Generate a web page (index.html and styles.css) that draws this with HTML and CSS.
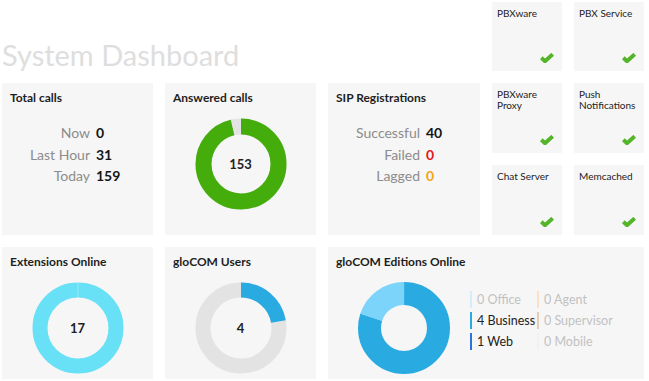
FILE: index.html
```html
<!DOCTYPE html>
<html lang="en">
<head>
<meta charset="utf-8">
<title>System Dashboard</title>
<link rel="stylesheet" href="styles.css">
</head>
<body>
<div class="dash">
  <h1 class="page-title">System Dashboard</h1>

  <section class="tile t1"><span class="tile-name">PBXware</span><svg class="check" viewBox="0 0 14 10" width="14" height="10"><path d="M1.3 4.8 L5 8.2 L12.7 1.3"/></svg></section>
  <section class="tile t2"><span class="tile-name">PBX Service</span><svg class="check" viewBox="0 0 14 10" width="14" height="10"><path d="M1.3 4.8 L5 8.2 L12.7 1.3"/></svg></section>
  <section class="tile t3"><span class="tile-name">PBXware<br>Proxy</span><svg class="check" viewBox="0 0 14 10" width="14" height="10"><path d="M1.3 4.8 L5 8.2 L12.7 1.3"/></svg></section>
  <section class="tile t4"><span class="tile-name">Push<br>Notifications</span><svg class="check" viewBox="0 0 14 10" width="14" height="10"><path d="M1.3 4.8 L5 8.2 L12.7 1.3"/></svg></section>
  <section class="tile t5"><span class="tile-name">Chat Server</span><svg class="check" viewBox="0 0 14 10" width="14" height="10"><path d="M1.3 4.8 L5 8.2 L12.7 1.3"/></svg></section>
  <section class="tile t6"><span class="tile-name">Memcached</span><svg class="check" viewBox="0 0 14 10" width="14" height="10"><path d="M1.3 4.8 L5 8.2 L12.7 1.3"/></svg></section>

  <section class="card c-total">
    <h2 class="card-title">Total calls</h2>
    <div class="stats stats-total">
      <span class="lbl">Now</span><span class="val">0</span>
      <span class="lbl">Last Hour</span><span class="val">31</span>
      <span class="lbl">Today</span><span class="val">159</span>
    </div>
  </section>

  <section class="card c-answered">
    <h2 class="card-title">Answered calls</h2>
    <div class="donut">
      <svg viewBox="0 0 92 92" width="92" height="92">
        <circle class="ring" cx="46" cy="46" r="37.5" stroke="#e4e4e4" stroke-width="16"/>
        <circle class="ring seg" cx="46" cy="46" r="37.5" stroke="#44ad0c" stroke-width="16" stroke-dasharray="226.7 300"/>
      </svg>
      <span class="donut-num">153</span>
    </div>
  </section>

  <section class="card c-sip">
    <h2 class="card-title">SIP Registrations</h2>
    <div class="stats stats-sip">
      <span class="lbl">Successful</span><span class="val">40</span>
      <span class="lbl">Failed</span><span class="val red">0</span>
      <span class="lbl">Lagged</span><span class="val orange">0</span>
    </div>
  </section>

  <section class="card c-ext">
    <h2 class="card-title">Extensions Online</h2>
    <div class="donut">
      <svg viewBox="0 0 92 92" width="92" height="92">
        <circle class="ring" cx="46" cy="46" r="38" stroke="#68e1f7" stroke-width="15"/>
        <line x1="46" y1="0.5" x2="46" y2="15.5" stroke="#ffffff" stroke-opacity="0.35" stroke-width="0.8"/>
      </svg>
      <span class="donut-num">17</span>
    </div>
  </section>

  <section class="card c-users">
    <h2 class="card-title">gloCOM Users</h2>
    <div class="donut">
      <svg viewBox="0 0 92 92" width="92" height="92">
        <circle class="ring" cx="46" cy="46" r="38" stroke="#e3e3e3" stroke-width="15"/>
        <circle class="ring seg" cx="46" cy="46" r="38" stroke="#29abe2" stroke-width="15" stroke-dasharray="53 300"/>
      </svg>
      <span class="donut-num">4</span>
    </div>
  </section>

  <section class="card c-editions">
    <h2 class="card-title">gloCOM Editions Online</h2>
    <div class="editions-body">
      <div class="donut donut-wide">
        <svg viewBox="0 0 92 92" width="92" height="92">
          <circle class="ring seg" cx="46" cy="46" r="34.5" stroke="#29abe2" stroke-width="23" stroke-dasharray="173.4 300"/>
          <circle class="ring seg web" cx="46" cy="46" r="34.5" stroke="#7dd4fa" stroke-width="23" stroke-dasharray="43.4 300"/>
        </svg>
      </div>
      <ul class="legend">
        <li class="lg muted"><i class="bar b-office"></i>0 Office</li>
        <li class="lg muted"><i class="bar b-agent"></i>0 Agent</li>
        <li class="lg"><i class="bar b-business"></i>4 Business</li>
        <li class="lg muted"><i class="bar b-super"></i>0 Supervisor</li>
        <li class="lg"><i class="bar b-web"></i>1 Web</li>
        <li class="lg muted"><i class="bar b-mobile"></i>0 Mobile</li>
      </ul>
    </div>
  </section>
</div>
</body>
</html>
```

FILE: styles.css
```css
* { box-sizing: border-box; }

html, body {
  margin: 0;
  padding: 0;
  background: #ffffff;
}

body {
  font-family: Lato, "Open Sans", "Liberation Sans", sans-serif;
  color: #222;
}

.dash {
  display: grid;
  grid-template-columns: 151px 151px 152px 70px 70px;
  grid-template-rows: 69px 70px 70px 132px;
  gap: 12px;
  padding: 2px 0 0 2px;
}

.page-title {
  grid-column: 1 / 4;
  grid-row: 1;
  align-self: end;
  margin: 0 0 2px 0;
  font-size: 29px;
  line-height: 29px;
  font-weight: 400;
  color: #dedede;
  white-space: nowrap;
}

.card, .tile {
  background: #f6f6f6;
}

/* status tiles */
.tile {
  display: flex;
  flex-direction: column;
  justify-content: space-between;
  padding: 6px 8px 8px 5px;
}
.t1 { grid-column: 4; grid-row: 1; }
.t2 { grid-column: 5; grid-row: 1; }
.t3 { grid-column: 4; grid-row: 2; }
.t4 { grid-column: 5; grid-row: 2; }
.t5 { grid-column: 4; grid-row: 3; }
.t6 { grid-column: 5; grid-row: 3; }

.tile-name {
  font-size: 10px;
  line-height: 11px;
  color: #222;
}

.check {
  align-self: flex-end;
  display: block;
}
.check path {
  fill: none;
  stroke: #55b52a;
  stroke-width: 4;
  stroke-linecap: butt;
  stroke-linejoin: miter;
}

/* cards */
.card {
  padding: 8px;
  display: flex;
  flex-direction: column;
}
.c-total { grid-column: 1; grid-row: 2 / 4; }
.c-answered { grid-column: 2; grid-row: 2 / 4; }
.c-sip { grid-column: 3; grid-row: 2 / 4; }
.c-ext { grid-column: 1; grid-row: 4; }
.c-users { grid-column: 2; grid-row: 4; }
.c-editions { grid-column: 3 / 6; grid-row: 4; }

.card-title {
  margin: 0;
  font-size: 12px;
  line-height: 14px;
  font-weight: 700;
  color: #1e1e1e;
  white-space: nowrap;
}

/* stat lists */
.stats {
  display: grid;
  column-gap: 6px;
  margin-top: 17px;
  font-size: 14px;
  line-height: 21.5px;
}
.stats-total { grid-template-columns: 80px auto; }
.stats-sip { grid-template-columns: 84px auto; }

.lbl {
  text-align: right;
  color: #8c8c8c;
  white-space: nowrap;
}
.val {
  font-weight: 700;
  color: #151515;
}
.val.red { color: #e3191b; }
.val.orange { color: #f2a516; }

/* donuts */
.donut {
  display: grid;
  place-items: center;
  align-self: center;
  margin-top: 13px;
  width: 92px;
  height: 92px;
}
.donut > svg, .donut > .donut-num {
  grid-area: 1 / 1;
}
.donut svg { display: block; }
.ring { fill: none; }
.seg {
  transform: rotate(-90deg);
  transform-origin: 46px 46px;
}
.web {
  transform: rotate(198deg);
}
.donut-num {
  font-size: 13px;
  font-weight: 700;
  color: #222;
}

/* editions */
.editions-body {
  display: flex;
  align-items: flex-start;
  margin-top: 13px;
}
.donut-wide {
  margin: 0 0 0 22px;
  align-self: flex-start;
}
.legend {
  list-style: none;
  margin: 7px 0 0 20px;
  padding: 0;
  display: grid;
  grid-template-columns: 67px auto;
  grid-auto-rows: 21px;
}
.lg {
  display: flex;
  align-items: center;
  gap: 5px;
  font-size: 12.5px;
  color: #222;
  white-space: nowrap;
}
.lg.muted { color: #c2c2c2; }
.bar {
  display: block;
  flex: none;
  width: 2px;
  height: 17px;
}
.b-office { background: #d3edfb; }
.b-business { background: #29abe2; }
.b-web { background: #2b74dc; }
.b-agent { background: #fcdfc4; }
.b-super { background: #e8cdb6; }
.b-mobile { background: #f1f1f1; }
```
